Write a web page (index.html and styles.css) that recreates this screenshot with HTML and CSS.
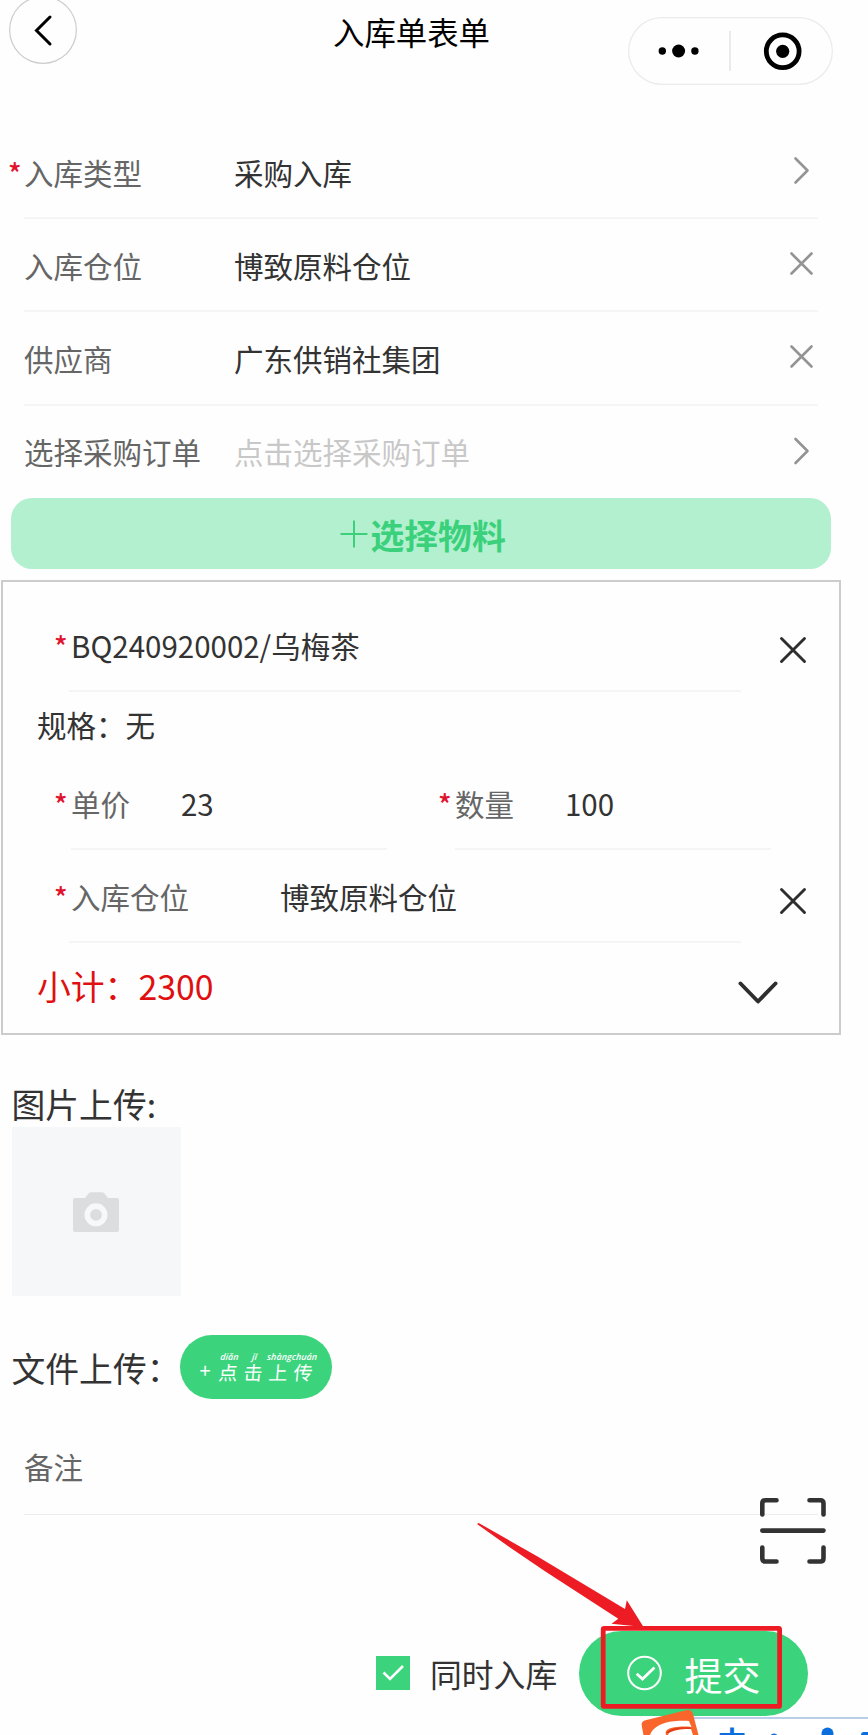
FILE: index.html
```html
<!DOCTYPE html>
<html lang="zh-CN">
<head>
  <meta charset="UTF-8" />
  <meta name="viewport" content="width=device-width, initial-scale=1.0"/>
  <title>入库单表单</title>
  <link rel="stylesheet" href="styles.css">
</head>
<body>
  <header class="navbar">
    <div class="back">
      <svg width="68" height="68" viewBox="0 0 68 68"><path d="M41 21 L27.5 34.5 L41 48" fill="none" stroke="#000" stroke-width="3" stroke-linecap="round"/></svg>
    </div>
    <h1>入库单表单</h1>
    <div class="capsule">
      <svg width="204" height="68" viewBox="0 0 204 68">
        <circle cx="34.3" cy="34" r="3.7"/>
        <circle cx="50.6" cy="34" r="6.5"/>
        <circle cx="66.9" cy="34" r="3.7"/>
        <path d="M102 14V54" stroke="#e2e2e2" stroke-width="1.4"/>
        <circle cx="154.7" cy="34.3" r="16.4" fill="none" stroke="#000" stroke-width="4.8"/>
        <circle cx="154.7" cy="34.3" r="6.6"/>
      </svg>
    </div>
  </header>

  <div class="form">
    <div class="row">
      <span class="star">*</span>
      <div class="cell">
        <label>入库类型</label>
        <span class="value">采购入库</span>
        <svg class="icon" width="32" height="32" viewBox="0 0 32 32"><path d="M9.5 3.5 L21.5 15.5 L9.5 27.5"/></svg>
      </div>
    </div>
    <div class="row">
      <span class="star"></span>
      <div class="cell">
        <label>入库仓位</label>
        <span class="value">博致原料仓位</span>
        <svg class="icon" width="32" height="32" viewBox="0 0 32 32"><path d="M5.5 5.5 L25.5 25.5 M25.5 5.5 L5.5 25.5"/></svg>
      </div>
    </div>
    <div class="row">
      <span class="star"></span>
      <div class="cell">
        <label>供应商</label>
        <span class="value">广东供销社集团</span>
        <svg class="icon" width="32" height="32" viewBox="0 0 32 32"><path d="M5.5 5.5 L25.5 25.5 M25.5 5.5 L5.5 25.5"/></svg>
      </div>
    </div>
    <div class="row">
      <span class="star"></span>
      <div class="cell last">
        <label>选择采购订单</label>
        <span class="value placeholder">点击选择采购订单</span>
        <svg class="icon" width="32" height="32" viewBox="0 0 32 32"><path d="M9.5 5 L21.5 17 L9.5 29"/></svg>
      </div>
    </div>
  </div>

  <div class="add-btn">
    <svg width="28" height="28" viewBox="0 0 28 28"><path d="M0.5 14H27.5M14 0.5V27.5" stroke="#3bd07c" stroke-width="2"/></svg>
    <span>选择物料</span>
  </div>

  <div class="card">
    <div class="row">
      <span class="star">*</span>
      <div class="cell wide"><span class="value">BQ240920002/乌梅茶</span></div>
      <svg class="close" width="28" height="28" viewBox="0 0 28 28"><path d="M2.5 2.5 L25.5 25.5 M25.5 2.5 L2.5 25.5"/></svg>
    </div>
    <p class="spec">规格：无</p>
    <div class="row pair">
      <span class="star">*</span>
      <div class="cell"><label>单价</label><span class="value">23</span></div>
      <span class="star second">*</span>
      <div class="cell"><label>数量</label><span class="value">100</span></div>
    </div>
    <div class="row">
      <span class="star">*</span>
      <div class="cell wide"><label>入库仓位</label><span class="value">博致原料仓位</span></div>
      <svg class="close" width="28" height="28" viewBox="0 0 28 28"><path d="M2.5 2.5 L25.5 25.5 M25.5 2.5 L2.5 25.5"/></svg>
    </div>
    <div class="subtotal">
      <span>小计：2300</span>
      <svg width="42" height="26" viewBox="0 0 42 26"><path d="M3.5 3.5 L21 21.5 L38.5 3.5" fill="none" stroke="#2e2e2e" stroke-width="3.9" stroke-linecap="round" stroke-linejoin="round"/></svg>
    </div>
  </div>

  <p class="section-title">图片上传:</p>
  <div class="photo">
    <svg width="46" height="40" viewBox="0 0 46 40">
      <path d="M2 6H12L15.5 1.5Q16.5 0.3 18 0.3H29Q30.5 0.3 31.5 1.5L35 6H44Q46 6 46 8V38Q46 40 44 40H2Q0 40 0 38V8Q0 6 2 6Z" fill="#dcddde"/>
      <circle cx="23" cy="22.8" r="8.7" fill="none" stroke="#f7f8fa" stroke-width="5.6"/>
    </svg>
  </div>

  <div class="file">
    <span>文件上传：</span>
    <div class="upload-btn">
      <span class="plus">+</span>
      <span class="word"><i>diǎn</i>点</span>
      <span class="word"><i>jī</i>击</span>
      <span class="word"><i>shàng</i>上</span>
      <span class="word"><i>chuán</i>传</span>
    </div>
  </div>

  <div class="remark"><label>备注</label></div>

  <div class="footer">
    <div class="checkbox">
      <svg width="34" height="34" viewBox="0 0 34 34"><path d="M7.5 16.5 L14 23 L27 10" fill="none" stroke="#fff" stroke-width="2.6"/></svg>
    </div>
    <span class="check-label">同时入库</span>
    <div class="submit">
      <svg width="36" height="36" viewBox="0 0 36 36" fill="none" stroke="#fff">
        <circle cx="17.5" cy="18" r="16.3" stroke-width="2"/>
        <path d="M9.7 18.7 L15.5 24 L27.5 12.5" stroke-width="2.8"/>
      </svg>
      <span>提交</span>
    </div>
  </div>

  <svg class="scan" width="68" height="68" viewBox="0 0 68 68">
    <path d="M3.3 17.5V6.5Q3.3 3.3 6.5 3.3H17.5 M50.5 3.3H61.3Q64.5 3.3 64.5 6.5V17.5 M64.5 50.5V61.3Q64.5 64.5 61.3 64.5H50.5 M17.5 64.5H6.5Q3.3 64.5 3.3 61.3V50.5 M3.3 33.6H64.5"/>
  </svg>

  <!-- arrow and frame pointing at the submit button -->
  <svg class="mark" width="320" height="200" viewBox="0 0 320 200">
    <path d="M7 4 L8.7 3 L66.7 36 L155 89 L156.8 80.3 L173.5 107 L141.5 103.7 L148.3 98.7 L75 51.2 L40 27.5 Z" fill="#ed1c24"/>
    <rect x="133.2" y="108.4" width="176.4" height="78" rx="1" fill="none" stroke="#ed1c24" stroke-width="4.8"/>
  </svg>

  <div class="ime">
    <svg class="ime-logo" width="64" height="28" viewBox="0 0 64 28">
      <path d="M3.5 28 L1.8 19 Q0.8 14.5 5.5 13.2 L46 3.2 Q51.5 2 53 7 L58.5 28Z" fill="#f9652a"/>
      <path d="M10 28 C13 20 22 15.5 34 14.3 C41 13.5 47 13.7 49 14 L51.5 20 C44 19 32 19.5 27 23 Q25 24.5 26 28Z" fill="#fff"/>
      <path d="M26 26 C30 20.5 42 19.5 51 20.5 V22 C42 21.5 34 22.5 29 26Z" fill="#e23d16"/>
      <path d="M29 26 C34 22.8 42 21.8 51 22 L53 28 H28Z" fill="#fff"/>
    </svg>
    <span class="ime-text">中</span>
    <svg width="104" height="16" viewBox="0 0 104 16" fill="#0a6fdc">
      <circle cx="10" cy="18" r="3.6"/>
      <circle cx="63.5" cy="14.5" r="6"/>
      <rect x="97" y="13" width="14" height="8" rx="3"/>
    </svg>
  </div>
</body>
</html>
```
FILE: styles.css
```css
* {
  box-sizing: border-box;
}
body {
  position: relative;
  width: 868px;
  height: 1735px;
  margin: 0;
  overflow: hidden;
  background: #fefefe;
  color: #333;
  font-family: "Noto Sans CJK SC", sans-serif;
  font-size: 29.5px;
}
svg {
  display: block;
  flex: none;
}
p, h1 {
  margin: 0;
}

.navbar {
  display: flex;
  align-items: flex-start;
  height: 126px;
}
.back {
  width: 68px;
  height: 68px;
  margin: -4px 0 0 9px;
  border-radius: 50%;
  box-shadow: inset 0 0 0 1.2px #ccc;
}
h1 {
  width: 160px;
  margin: 8px 0 0 256px;
  color: #000;
  font-size: 31.4px;
  font-weight: normal;
  line-height: 48px;
  white-space: nowrap;
}
.capsule {
  width: 205px;
  height: 68px;
  margin: 17px 0 0 134.5px;
  border-radius: 34px;
  box-shadow: inset 0 0 0 1.3px #ebebeb;
}

/* form rows */
.form {
  height: 372px;
}
.row {
  display: flex;
  width: 818px;
  height: 93.2px;
}
.star {
  width: 16px;
  margin-left: 8px;
  color: #e0142c;
  font-size: 28px;
  font-weight: 500;
  line-height: 92px;
}
.cell {
  display: flex;
  flex: 1;
  align-items: center;
  border-bottom: 2px solid #f5f5f5;
  white-space: nowrap;
}
.cell.last {
  border-color: transparent;
}
label {
  width: 210px;
  color: #666;
}
.placeholder {
  color: #c8c8c8;
}
.icon {
  margin: -2px 0 0 auto;
  fill: none;
  stroke: #949494;
  stroke-width: 2.6;
  stroke-linecap: round;
  stroke-linejoin: round;
}

.add-btn {
  display: flex;
  align-items: center;
  width: 820px;
  height: 71px;
  margin-left: 11px;
  padding: 1px 0 0 328.5px;
  gap: 3px;
  border-radius: 21px;
  background: #b2f0cf;
  color: #3bd07c;
  font-size: 33.8px;
  font-weight: bold;
}

/* material card */
.card {
  width: 840px;
  height: 455px;
  margin: 11px 0 0 1px;
  padding-top: 17px;
  border: 2px solid #ccc;
}
.card .row {
  width: 100%;
  height: 93px;
  padding-left: 43px;
}
.card .wide {
  flex: none;
  width: 672px;
  margin-left: -1px;
  padding-left: 2px;
}
.card .wide label {
  width: 209px;
}
.close {
  margin: 37px 0 0 38px;
  fill: none;
  stroke: #2e2e2e;
  stroke-width: 2.9;
  stroke-linecap: round;
}
.spec {
  height: 65px;
  padding-left: 34px;
  line-height: 65px;
}
.pair .cell {
  flex: none;
  width: 316px;
  margin-left: 1px;
}
.pair label {
  width: 110px;
  padding-left: 0;
}
.pair .second {
  margin-left: 51px;
}
.subtotal {
  display: flex;
  align-items: center;
  justify-content: space-between;
  height: 85px;
  padding: 0 60px 0 34px;
  color: #e01010;
  font-size: 33.8px;
}
.subtotal svg {
  margin-top: 14px;
}

/* uploads */
.section-title {
  height: 92px;
  padding: 44px 0 0 11.5px;
  font-size: 33.8px;
  line-height: 50px;
}
.photo {
  display: flex;
  align-items: center;
  justify-content: center;
  width: 169px;
  height: 169px;
  margin-left: 11.5px;
  background: #f5f7f9;
}
.photo svg {
  margin-top: 1px;
}
.file {
  display: flex;
  align-items: center;
  margin-top: 39px;
  padding-left: 11.5px;
  height: 64px;
  font-size: 33.8px;
}
.upload-btn {
  display: flex;
  align-items: center;
  width: 152px;
  height: 64px;
  padding: 0 16px 0 19px;
  border-radius: 32px;
  background: #3bd47c;
  color: #fff;
}
.plus {
  width: 17px;
  margin-top: 5px;
  font-size: 20px;
}
.word {
  display: flex;
  flex-direction: column;
  align-items: center;
  width: 25px;
  font-size: 19px;
  font-weight: 400;
  line-height: 22px;
  transform: skewX(-5deg);
}
.word i {
  font-family: "Open Sans", "Noto Sans", sans-serif;
  font-size: 9px;
  font-weight: 600;
  line-height: 9px;
}

.remark {
  display: flex;
  align-items: center;
  width: 794px;
  height: 93px;
  margin: 23px 0 0 24px;
  padding-bottom: 4px;
  border-bottom: 1.5px solid #ececec;
}

/* bottom bar */
.footer {
  display: flex;
  align-items: center;
  height: 86px;
  margin-top: 115px;
  padding-left: 375.5px;
}
.checkbox {
  width: 34px;
  height: 34px;
  background: #3bd47c;
}
.check-label {
  width: 169px;
  padding-left: 20.5px;
  font-size: 31.8px;
}
.submit {
  display: flex;
  align-items: center;
  width: 229px;
  height: 85px;
  padding-left: 48px;
  gap: 22px;
  border-radius: 43px;
  background: #3bd47c;
  color: #fff;
  font-size: 38px;
}

.scan {
  position: absolute;
  left: 758.5px;
  top: 1496.5px;
  fill: none;
  stroke: #333;
  stroke-width: 4.6;
  stroke-linecap: round;
}
.mark {
  position: absolute;
  left: 470px;
  top: 1520px;
}

/* input method toolbar */
.ime {
  position: absolute;
  left: 690px;
  top: 1717px;
  display: flex;
  width: 178px;
  height: 18px;
  border-top: 2px solid #b9cfe8;
  background: #fff;
}
.ime-logo {
  position: absolute;
  left: -50px;
  top: -12px;
}
.ime-text {
  width: 74px;
  height: 16px;
  padding-left: 27px;
  overflow: hidden;
  color: #0a6fdc;
  font-size: 30px;
  font-weight: bold;
  line-height: 42px;
}
```
